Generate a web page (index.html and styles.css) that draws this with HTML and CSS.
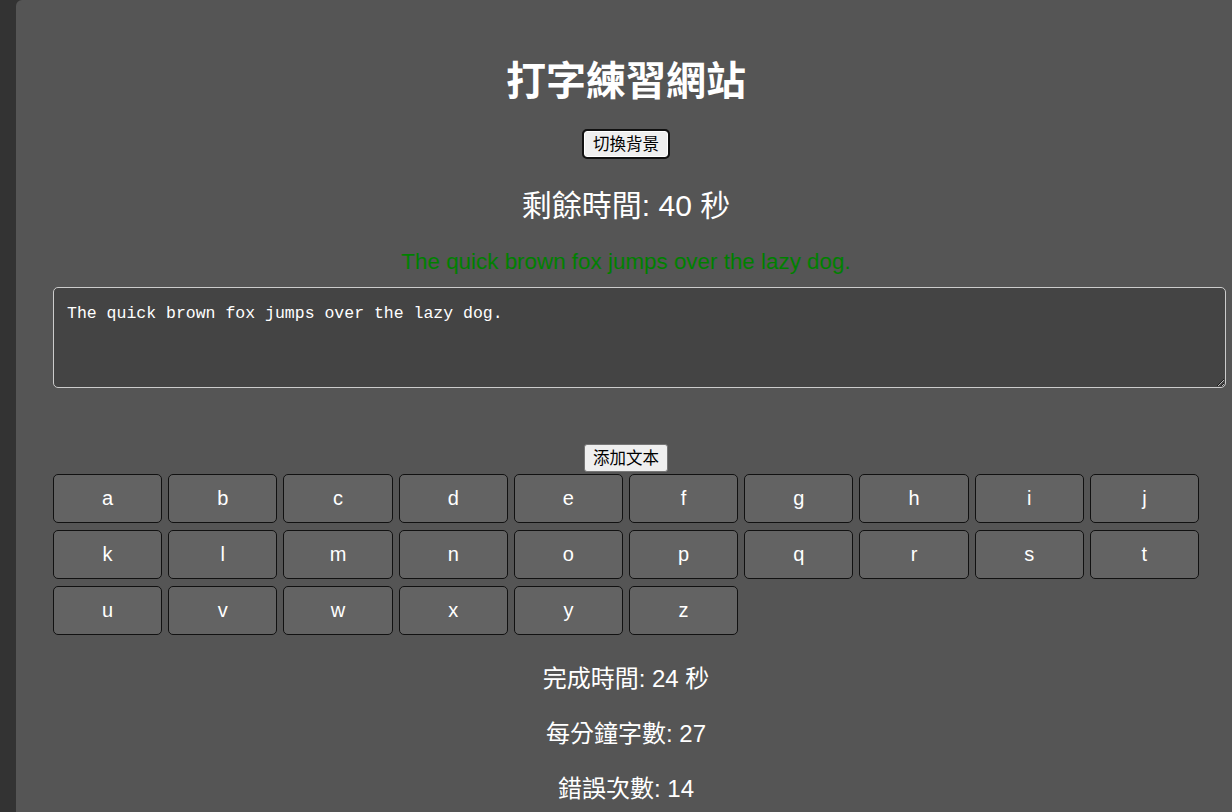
FILE: index.html
```html
<!DOCTYPE html>
<html lang="zh-Hant">
<head>
<meta charset="utf-8">
<title>打字練習網站</title>
<link rel="stylesheet" href="styles.css">
</head>
<body>
<div class="page">
  <h1 class="title">打字練習網站</h1>
  <div class="center"><button class="btn focused">切換背景</button></div>
  <p class="timer">剩餘時間: 40 秒</p>
  <p class="sample">The quick brown fox jumps over the lazy dog.</p>
  <textarea class="input">The quick brown fox jumps over the lazy dog.</textarea>
  <div class="center add-row"><button class="btn">添加文本</button></div>
  <div class="keyboard">
    <button class="key">a</button><button class="key">b</button><button class="key">c</button><button class="key">d</button><button class="key">e</button><button class="key">f</button><button class="key">g</button><button class="key">h</button><button class="key">i</button><button class="key">j</button>
    <button class="key">k</button><button class="key">l</button><button class="key">m</button><button class="key">n</button><button class="key">o</button><button class="key">p</button><button class="key">q</button><button class="key">r</button><button class="key">s</button><button class="key">t</button>
    <button class="key">u</button><button class="key">v</button><button class="key">w</button><button class="key">x</button><button class="key">y</button><button class="key">z</button>
  </div>
  <p class="stat first">完成時間: 24 秒</p>
  <p class="stat">每分鐘字數: 27</p>
  <p class="stat">錯誤次數: 14</p>
</div>
</body>
</html>
```
FILE: styles.css
```css
html, body {
  margin: 0;
  padding: 0;
  background: #333333;
  height: 100%;
  overflow: hidden;
}
body {
  font-family: "Liberation Sans", Arial, "Noto Sans CJK TC", sans-serif;
  color: #ffffff;
}
.page {
  margin-left: 16px;
  min-height: 812px;
  background: #555555;
  border-top-left-radius: 6px;
  padding: 1px 33px 0 37px;
  box-sizing: border-box;
  display: flex;
  flex-direction: column;
}
.title {
  margin: 56px 0 0;
  font-size: 40px;
  line-height: 48px;
  font-weight: bold;
  text-align: center;
}
.center {
  display: flex;
  justify-content: center;
}
.btn {
  font-family: "Liberation Sans", Arial, "Noto Sans CJK TC", sans-serif;
  font-size: 16.5px;
  line-height: 20px;
  height: 28px;
  padding: 0 8px;
  color: #000;
  background: #efefef;
  border: 1px solid #767676;
  border-radius: 3px;
  margin-top: 25px;
}
.btn.focused {
  border: 1px solid #ffffff;
  outline: 2px solid #101010;
  outline-offset: 0;
  border-radius: 3px;
  height: 26px;
  margin-top: 26px;
}
.timer {
  margin: 31px 0 0;
  font-size: 30px;
  line-height: 36px;
  text-align: center;
}
.sample {
  margin: 25px 0 0;
  font-size: 22.4px;
  line-height: 26px;
  color: #008000;
  text-align: center;
}
.input {
  margin-top: 12px;
  width: calc(100% + 27px);
  height: 101px;
  box-sizing: border-box;
  background: #444444;
  color: #ffffff;
  border: 1px solid #cccccc;
  border-radius: 5px;
  padding: 15px 13px;
  font-family: "Liberation Mono", "Courier New", monospace;
  font-size: 16.5px;
  line-height: 22px;
  resize: vertical;
}
.add-row .btn {
  margin-top: 56px;
}
.keyboard {
  display: grid;
  grid-template-columns: repeat(10, 1fr);
  column-gap: 6px;
  row-gap: 7px;
  margin-top: 2px;
}
.key {
  height: 49px;
  background: #636363;
  color: #ffffff;
  border: 1px solid #111111;
  border-radius: 5px;
  font-family: "Liberation Sans", Arial, sans-serif;
  font-size: 20px;
  padding: 0;
}
.stat {
  margin: 27px 0 0;
  font-size: 24px;
  line-height: 28px;
  text-align: center;
}
.stat.first {
  margin-top: 30px;
}
```
